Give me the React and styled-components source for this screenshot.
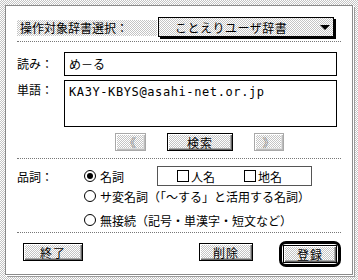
import React from 'react';
import styled, { createGlobalStyle, css } from 'styled-components';

const dither = css`
  background: repeating-conic-gradient(#c4c4c4 0 25%, #ffffff 0 50%) 0 0 / 2px 2px;
`;

const Global = createGlobalStyle`
  html, body { margin: 0; padding: 0; }
  body {
    width: 358px; height: 280px; overflow: hidden;
    ${dither}
    font-family: "Noto Sans CJK JP", "Noto Sans", sans-serif;
    font-size: 12px; color: #000;
  }
`;

const Window = styled.div`
  box-sizing: border-box;
  margin: 5px;
  width: 348px;
  height: 270px;
  border: 1px solid #8a8a8a;
  box-shadow: 1px 1px 0 #fff, 2px 2px 0 #9a9a9a;
  background: #fff;
  padding: 11px 11px 0 11px;
  display: flex;
  flex-direction: column;
`;

const Header = styled.div`
  display: flex;
  align-items: flex-start;
  height: 22px;
`;

const HeaderLabel = styled.div`
  ${dither}
  box-sizing: border-box;
  width: 140px;
  height: 16px;
  margin-top: 3px;
  padding-left: 3px;
  line-height: 16px;
  white-space: nowrap;
`;

const Dropdown = styled.div`
  ${dither}
  box-sizing: border-box;
  margin-left: 1px;
  width: 176px;
  height: 20px;
  border: 1px solid #000;
  box-shadow: 2px 2px 0 #000;
  display: flex;
  align-items: center;
  padding-left: 16px;
  padding-right: 3px;
  letter-spacing: 0.5px;
  white-space: nowrap;
`;

const Arrow = styled.span`
  margin-left: auto;
  width: 0; height: 0;
  border-left: 5px solid transparent;
  border-right: 5px solid transparent;
  border-top: 5px solid #000;
`;

const Divider = styled.div`
  height: 0;
  border-top: 1px dotted #777;
  margin-top: ${p => p.$mt}px;
`;

const FieldRow = styled.div`
  display: flex;
  align-items: flex-start;
  margin-top: ${p => p.$mt}px;
`;

const FieldLabel = styled.div`
  width: 47px;
  padding-top: ${p => p.$pt}px;
  line-height: 16px;
  white-space: nowrap;
`;

const TextBox = styled.div`
  box-sizing: border-box;
  width: 273px;
  height: ${p => p.$h}px;
  border: 1px solid #000;
  padding: 3px 0 0 4px;
  line-height: 16px;
  white-space: nowrap;
  font-family: ${p => p.$mono ? '"DejaVu Sans Mono", monospace' : '"Noto Sans CJK JP", sans-serif'};
  letter-spacing: ${p => p.$mono ? '0.6px' : '0'};
  font-size: 12px;
`;

const NavRow = styled.div`
  display: flex;
  margin-top: 6px;
  padding-left: 98px;
  gap: 21px;
`;

const Button = styled.div`
  box-sizing: border-box;
  width: ${p => p.$w}px;
  height: 18px;
  display: flex;
  align-items: center;
  justify-content: center;
  ${dither}
  border: 1px solid ${p => (p.$disabled ? '#a8a8a8' : '#000')};
  color: ${p => (p.$disabled ? '#8c8c8c' : '#000')};
  box-shadow: inset 1px 1px 0 #fff, inset -1px -1px 0 ${p => (p.$disabled ? '#bbb' : '#666')},
    inset -2px -2px 0 ${p => (p.$disabled ? '#ddd' : '#aaa')};
  letter-spacing: 1px;
  white-space: nowrap;
  margin-left: ${p => p.$ml || 0};
  margin-top: ${p => p.$mt || 0}px;
`;

const PartRow = styled.div`
  display: flex;
  align-items: center;
  height: 20px;
  margin-top: ${p => p.$mt}px;
  padding-left: ${p => p.$pl || 0}px;
`;

const PartLabel = styled.div`
  width: 67px;
  white-space: nowrap;
`;

const RadioItem = styled.div`
  display: flex;
  align-items: center;
  gap: 4px;
  width: ${p => (p.$w ? `${p.$w}px` : 'auto')};
  white-space: nowrap;
`;

const RadioCircle = styled.span`
  box-sizing: border-box;
  width: 12px;
  height: 12px;
  border: 1px solid #000;
  border-radius: 50%;
  display: flex;
  align-items: center;
  justify-content: center;
  &::after {
    content: '';
    display: ${p => (p.$on ? 'block' : 'none')};
    width: 6px;
    height: 6px;
    border-radius: 50%;
    background: #000;
  }
`;

const CheckGroup = styled.div`
  box-sizing: border-box;
  width: 155px;
  height: 20px;
  border: 1px solid #555;
  display: flex;
  align-items: center;
  padding-left: 19px;
`;

const CheckItem = styled.div`
  display: flex;
  align-items: center;
  gap: 2px;
  width: 73px;
  white-space: nowrap;
`;

const CheckBox = styled.span`
  box-sizing: border-box;
  width: 12px;
  height: 12px;
  border: 1px solid #000;
  background: #fff;
`;

const BottomRow = styled.div`
  display: flex;
  align-items: flex-start;
  margin-top: 8px;
  padding-left: 6px;
`;

const DefaultRing = styled.div`
  box-sizing: border-box;
  width: 62px;
  height: 26px;
  border: 3px solid #000;
  border-radius: 7px;
  padding: 1px;
  margin-left: 26px;
  display: flex;
`;

export default function App() {
  return (
    <>
      <Global />
      <Window>
        <Header>
          <HeaderLabel>操作対象辞書選択：</HeaderLabel>
          <Dropdown>
            ことえりユーザ辞書
            <Arrow />
          </Dropdown>
        </Header>
        <Divider $mt={2} />
        <FieldRow $mt={10}>
          <FieldLabel $pt={4}>読み：</FieldLabel>
          <TextBox $h={24}>め－る</TextBox>
        </FieldRow>
        <FieldRow $mt={4}>
          <FieldLabel $pt={2}>単語：</FieldLabel>
          <TextBox $h={47} $mono>KA3Y-KBYS@asahi-net.or.jp</TextBox>
        </FieldRow>
        <NavRow>
          <Button $w={31} $disabled>《</Button>
          <Button $w={66}>検索</Button>
          <Button $w={30} $disabled>》</Button>
        </NavRow>
        <Divider $mt={7} />
        <PartRow $mt={7}>
          <PartLabel>品詞：</PartLabel>
          <RadioItem $w={73}>
            <RadioCircle $on />
            名詞
          </RadioItem>
          <CheckGroup>
            <CheckItem>
              <CheckBox />
              人名
            </CheckItem>
            <CheckItem>
              <CheckBox />
              地名
            </CheckItem>
          </CheckGroup>
        </PartRow>
        <PartRow $mt={0} $pl={67}>
          <RadioItem>
            <RadioCircle />
            サ変名詞（「～する」と活用する名詞）
          </RadioItem>
        </PartRow>
        <PartRow $mt={4} $pl={67}>
          <RadioItem>
            <RadioCircle />
            無接続（記号・単漢字・短文など）
          </RadioItem>
        </PartRow>
        <Divider $mt={2} />
        <BottomRow>
          <Button $w={60} $mt={2}>終了</Button>
          <Button $w={54} $mt={2} $ml="auto">削除</Button>
          <DefaultRing>
            <Button $w={54}>登録</Button>
          </DefaultRing>
        </BottomRow>
      </Window>
    </>
  );
}
